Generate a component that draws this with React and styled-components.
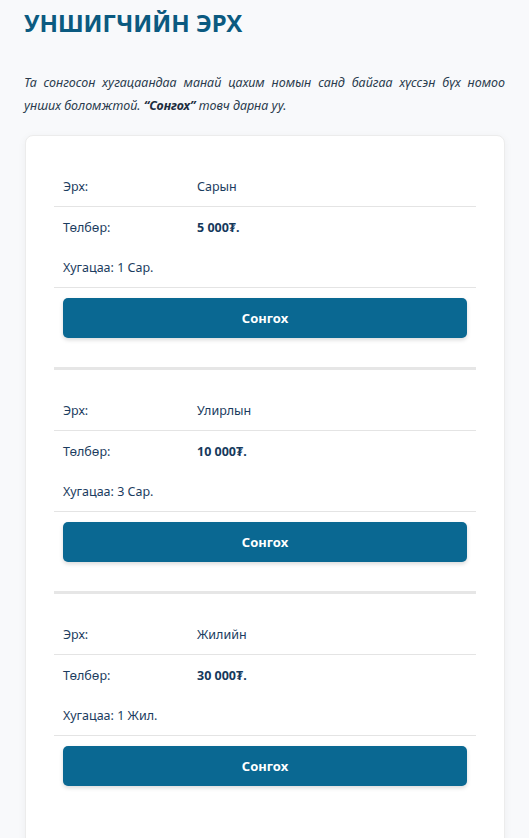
import React from "react"
import styled, { createGlobalStyle } from "styled-components"

const plans = [
    { name: "Сарын", price: "5 000₮.", term: "1 Сар." },
    { name: "Улирлын", price: "10 000₮.", term: "3 Сар." },
    { name: "Жилийн", price: "30 000₮.", term: "1 Жил." },
]

function App(){
    return(
        <>
            <GlobalStyle />
            <Page>
                <Title>Уншигчийн эрх</Title>
                <Intro>
                    Та сонгосон хугацаандаа манай цахим номын санд байгаа хүссэн бүх номоо
                    унших боломжтой. <b>“Сонгох”</b> товч дарна уу.
                </Intro>
                <Card>
                    {plans.map((plan, i) => (
                        <Plan key={plan.name} last={i === plans.length - 1}>
                            <Row bordered>
                                <Label>Эрх:</Label>
                                <Value>{plan.name}</Value>
                            </Row>
                            <Row>
                                <Label>Төлбөр:</Label>
                                <Price>{plan.price}</Price>
                            </Row>
                            <Row bordered tall>
                                <Label>Хугацаа: {plan.term}</Label>
                            </Row>
                            <ChooseButton>Сонгох</ChooseButton>
                        </Plan>
                    ))}
                </Card>
            </Page>
        </>
    )
}

export default App


const GlobalStyle = createGlobalStyle`
body{
    margin: 0;
    background: #f8f9fb;
    font-family: "Noto Sans", "Open Sans", sans-serif;
}
`
const Page = styled.div`
padding : 3px 24px 40px 24px;
`
const Title = styled.h1`
margin : 0;
font-size : 24px;
font-weight : 700;
text-transform : uppercase;
color : #0b5a80;
line-height : 40px;
`
const Intro = styled.p`
margin : 28px 0 18px 0;
font-size : 12.5px;
font-style : italic;
line-height : 23px;
text-align : justify;
color : #2a3b4d;
b{
    color : #1d2e40;
}
`
const Card = styled.div`
margin-left : 1px;
background : #fff;
border : 1px solid #ececec;
border-radius : 8px;
box-shadow : 0 2px 8px rgba(0,0,0,0.05);
padding : 31px 28px 60px 28px;
`
const Plan = styled.div`
padding-bottom : ${p => p.last ? "0" : "29px"};
margin-bottom : ${p => p.last ? "0" : "21px"};
border-bottom : ${p => p.last ? "none" : "3px solid #e6e6e6"};
`
const Row = styled.div`
display : grid;
grid-template-columns : 134px 1fr;
height : ${p => p.tall ? "41px" : "40px"};
align-items : center;
padding : 0 9px;
box-sizing : border-box;
border-bottom : ${p => p.bordered ? "1px solid #e4e4e4" : "none"};
font-size : 12.5px;
color : #1b3c60;
`
const Label = styled.span`
white-space : nowrap;
`
const Value = styled.span``
const Price = styled.span`
font-weight : 700;
color : #16395c;
`
const ChooseButton = styled.button`
display : block;
width : calc(100% - 18px);
margin : 10px 9px 0 9px;
height : 40px;
border : none;
border-radius : 5px;
background : #0a6892;
color : #fff;
font-family : inherit;
font-size : 13px;
font-weight : 700;
box-shadow : 0 2px 4px rgba(0,0,0,0.15);
cursor : pointer;
`
